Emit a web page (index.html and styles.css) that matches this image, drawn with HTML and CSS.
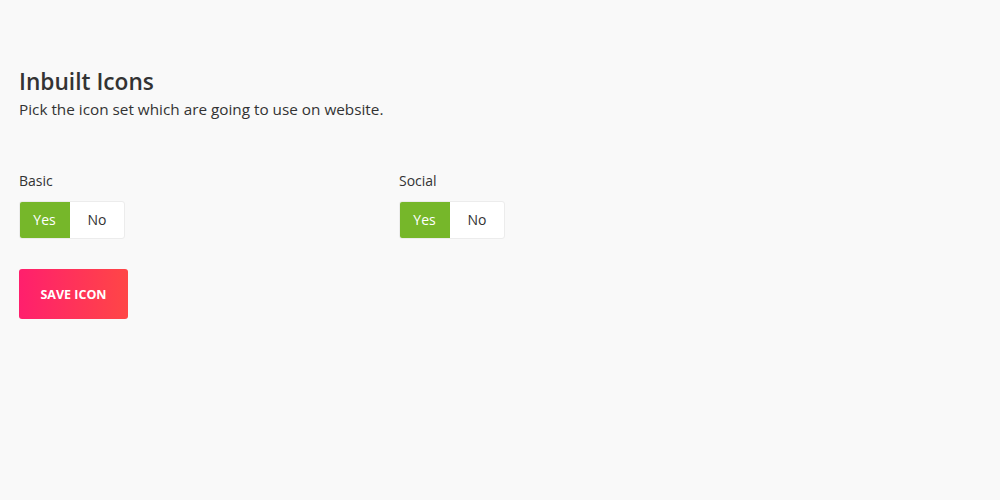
FILE: index.html
```html
<!DOCTYPE html>
<html>
<head>
<meta charset="utf-8">
<link rel="stylesheet" href="styles.css">
</head>
<body>
<div class="page">
  <h1 class="title">Inbuilt Icons</h1>
  <p class="subtitle">Pick the icon set which are going to use on website.</p>
  <div class="options">
    <div class="option">
      <div class="label">Basic</div>
      <div class="toggle">
        <span class="btn active">Yes</span>
        <span class="btn">No</span>
      </div>
    </div>
    <div class="option">
      <div class="label">Social</div>
      <div class="toggle">
        <span class="btn active">Yes</span>
        <span class="btn">No</span>
      </div>
    </div>
  </div>
  <button class="save">SAVE ICON</button>
</div>
</body>
</html>
```
FILE: styles.css
```css
html, body {
  margin: 0;
  padding: 0;
  background: #f9f9f9;
}
body {
  font-family: "Open Sans", "Noto Sans", sans-serif;
  color: #333;
}
.page {
  padding: 68px 19px 0;
}
.title {
  margin: 0;
  font-size: 22.7px;
  font-weight: 600;
  line-height: 28px;
  color: #333;
}
.subtitle {
  margin: 2px 0 0;
  font-size: 15.3px;
  line-height: 22px;
  color: #333;
}
.options {
  display: flex;
  margin-top: 51px;
}
.option {
  width: 380px;
}
.label {
  font-size: 14px;
  line-height: 20px;
  margin-bottom: 10px;
}
.toggle {
  display: inline-flex;
  border: 1px solid #ececec;
  border-radius: 3px;
  overflow: hidden;
  background: #fff;
}
.btn {
  height: 36px;
  line-height: 36px;
  font-size: 14px;
  text-align: center;
}
.btn.active {
  width: 51px;
  margin: -1px 0 -1px -1px;
  height: 38px;
  line-height: 38px;
  background: #76b72a;
  color: #fff;
}
.btn:not(.active) {
  width: 54px;
}
.save {
  display: block;
  margin-top: 30px;
  width: 109px;
  height: 50px;
  border: 0;
  border-radius: 3px;
  background: linear-gradient(to right, #ff1f6d, #ff4646);
  color: #fff;
  font-family: inherit;
  font-size: 12.5px;
  font-weight: 700;
  cursor: pointer;
}
```
